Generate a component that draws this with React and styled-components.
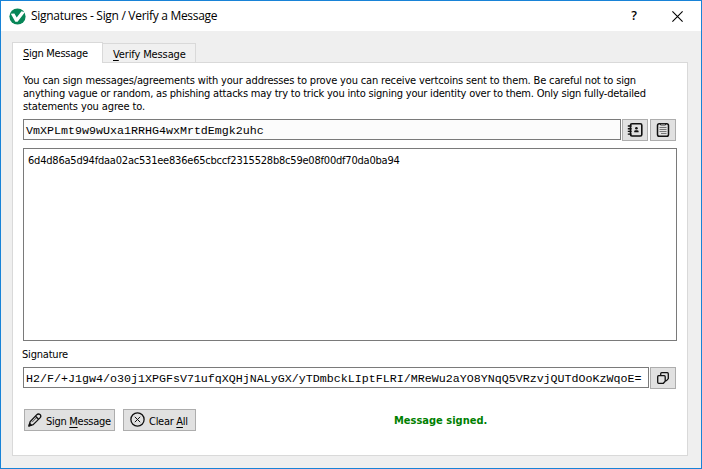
import React from "react";
import styled, { createGlobalStyle } from "styled-components";

const GlobalStyle = createGlobalStyle`
  * { box-sizing: border-box; }
  body { margin: 0; }
`;

const Window = styled.main`
  width: 702px;
  height: 469px;
  display: flex;
  flex-direction: column;
  border: 1px solid #1883d7;
  background: #efefef;
  color: #000;
  font: 11px/13px "DejaVu Sans Condensed", "DejaVu Sans", sans-serif;
  white-space: nowrap;
`;

const TitleBar = styled.header`
  height: 30px;
  flex: none;
  display: flex;
  align-items: center;
  padding: 0 18px 0 8px;
  background: #fff;
`;

const Title = styled.h1`
  flex: 1;
  margin: 0 0 0 5px;
  font: 400 12px/16px "Open Sans", sans-serif;
  letter-spacing: -0.3px;
`;

const CaptionButton = styled.button`
  display: flex;
  padding: 0;
  margin-left: 35px;
  border: 0;
  background: none;
  color: #000;
  font: 600 12.5px/16px "Open Sans", sans-serif;
`;

const Body = styled.div`
  flex: 1;
  display: flex;
  flex-direction: column;
  padding: 11px 13px 12px 11px;
`;

const Tabs = styled.nav`
  height: 21px;
  flex: none;
  display: flex;
  align-items: flex-end;
`;

const Tab = styled.button`
  width: ${(p) => (p.$active ? 91 : 93)}px;
  height: ${(p) => (p.$active ? 21 : 19)}px;
  margin-bottom: ${(p) => (p.$active ? 0 : 1)}px;
  padding: ${(p) => (p.$active ? "0 0 0 10px" : "3px 0 0 10px")};
  border: 1px solid #d9d9d9;
  border-bottom: 0;
  border-left-width: ${(p) => (p.$active ? 1 : 0)}px;
  background: ${(p) => (p.$active ? "#fff" : "#f0f0f0")};
  color: #000;
  font: inherit;
  letter-spacing: ${(p) => (p.$active ? -0.28 : -0.13)}px;
  text-align: left;
  position: relative;
  z-index: 1;
`;

const Panel = styled.section`
  flex: 1;
  display: flex;
  flex-direction: column;
  margin-top: -1px;
  padding: 11px 10px 0;
  border: 1px solid #d9d9d9;
  background: #fff;
`;

const Intro = styled.p`
  height: 45px;
  flex: none;
  margin: 0;
`;

const Line = styled.span`
  display: block;
  letter-spacing: ${(p) => p.$spacing}px;
`;

const FieldRow = styled.div`
  height: 22px;
  flex: none;
  display: flex;
  align-items: flex-start;
`;

const Field = styled.div`
  flex: 1;
  height: 21px;
  padding: 4px 2px 0;
  margin-right: 1px;
  border: 1px solid #7a7a7a;
  background: ${(p) => (p.$shaded ? "#fcfcfc" : "#fff")};
  font: 11.667px/14px "Courier New", "Liberation Mono", monospace;
`;

const MessageBox = styled.div`
  height: 193px;
  flex: none;
  margin-top: 7px;
  padding: 5px 4px;
  border: 1px solid #7a7a7a;
  letter-spacing: -0.21px;
`;

const Label = styled.div`
  height: 26px;
  flex: none;
  padding-top: 7px;
  margin-left: -1px;
  letter-spacing: -0.2px;
`;

const IconButton = styled.button`
  width: 26px;
  height: 22px;
  flex: none;
  display: flex;
  align-items: center;
  justify-content: center;
  padding: 0;
  margin-right: ${(p) => (p.$gap ? 2 : 1)}px;
  border: 1px solid #adadad;
  background: #e1e1e1;
`;

const Actions = styled.footer`
  display: flex;
  align-items: center;
  height: 22px;
  margin: 20px 0 0 1px;
`;

const ActionButton = styled.button`
  width: ${(p) => p.$width}px;
  height: 22px;
  display: flex;
  align-items: center;
  gap: ${(p) => p.$gap}px;
  padding: 3px 0 0 ${(p) => p.$inset}px;
  margin-right: 8px;
  border: 1px solid #adadad;
  background: #e1e1e1;
  color: #000;
  font: inherit;
  letter-spacing: -0.28px;

  svg { flex: none; margin-top: -4px; }
`;

const Status = styled.strong`
  margin-left: 190px;
  color: #008000;
  font-weight: 700;
`;

const Key = styled.span`
  text-decoration: underline;
  text-underline-offset: 1.5px;
  text-decoration-thickness: 1px;
  text-decoration-skip-ink: none;
`;

const Logo = () => (
  <svg width="17" height="17" viewBox="0 0 17 17">
    <circle cx="8.5" cy="8.5" r="8.1" fill="#078657" />
    <path d="M1.8 5.8l3.6-.3 2.3 4 4.800-6.200 3.400.9-7.300 9.500H6.300z" fill="#fff" />
  </svg>
);

const CloseIcon = () => (
  <svg width="11" height="11" viewBox="0 0 11 11" stroke="#000" strokeWidth="1.1">
    <path d="M.4.4l10.2 10.2M10.6.4L.4 10.6" />
  </svg>
);

const AddressBookIcon = () => (
  <svg width="16" height="16" viewBox="0 0 16 16" fill="none" stroke="#111">
    <rect x="3.5" y="1.700" width="11.300" height="12.300" rx="1.500" strokeWidth="1.600" />
    <path d="M.8 4h3.8M.8 6.700h3.800M.8 9.400h3.800M.8 12.100h3.800" strokeWidth="1.400" />
    <circle cx="9.400" cy="6.200" r="1.300" fill="#111" stroke="none" />
    <path d="M7.200 10.300V9.100c0-1 4.400-1 4.400 0v1.200z" fill="#111" stroke="none" />
  </svg>
);

const ClipboardIcon = () => (
  <svg width="14" height="16" viewBox="0 0 14 16" fill="none" stroke="#111">
    <rect x="1.500" y="1.700" width="11" height="12.600" rx="1.800" strokeWidth="1.500" />
    <path d="M4.500 1.500h5v1.500h-5z" fill="#bbb" strokeWidth=".8" />
    <path d="M3.500 5.500h7M3.500 7.500h7M3.500 9.500h7M5 11.500h5.500" stroke="#777" strokeWidth="1" />
  </svg>
);

const CopyIcon = () => (
  <svg width="12" height="12" viewBox="0 0 12 12" fill="none" stroke="#111" strokeWidth="1.3">
    <path d="M3.700 3.600V1.700q0-1 1-1h5.600q1 0 1 1v4.900l-1.800 2H8.200" />
    <path d="M1.600 3.700h5.600q1 0 1 1v4.600L6.400 11.300H1.700q-1 0-1-1V4.700q0-1 .9-1z" />
  </svg>
);

const PenIcon = () => (
  <svg width="14" height="14" viewBox="0 0 14 14" fill="none" stroke="#111" strokeWidth="1.300" strokeLinejoin="round">
    <path d="M1 13l1.100-4.200L8.600 1.900c1-1 2.200-1.300 3.400-.3 1.100 1 1 2.200 0 3.300L5.200 11.600z" />
    <path d="M1 13l.7-2.500 1.700 1.700z" fill="#111" />
    <path d="M7.500 3.300l3 2.900" strokeWidth="1.500" />
    <path d="M4.100 9.200l4.200-4.400" strokeWidth=".7" />
  </svg>
);

const ClearIcon = () => (
  <svg width="15" height="15" viewBox="0 0 15 15" fill="none" stroke="#111">
    <circle cx="7.500" cy="7.500" r="6.600" strokeWidth="1.300" />
    <path d="M4.800 4.800l5.400 5.400M10.200 4.800l-5.400 5.400" strokeWidth="1" />
  </svg>
);

export default function App() {
  return (
    <>
      <GlobalStyle />
      <Window>
        <TitleBar>
          <Logo />
          <Title>Signatures - Sign / Verify a Message</Title>
          <CaptionButton>?</CaptionButton>
          <CaptionButton aria-label="Close"><CloseIcon /></CaptionButton>
        </TitleBar>
        <Body>
          <Tabs>
            <Tab $active><Key>S</Key>ign Message</Tab>
            <Tab><Key>V</Key>erify Message</Tab>
          </Tabs>
          <Panel>
            <Intro>
              <Line $spacing={-0.163}>You can sign messages/agreements with your addresses to prove you can receive vertcoins sent to them. Be careful not to sign</Line>
              <Line $spacing={-0.208}>anything vague or random, as phishing attacks may try to trick you into signing your identity over to them. Only sign fully-detailed</Line>
              <Line $spacing={-0.12}>statements you agree to.</Line>
            </Intro>
            <FieldRow>
              <Field $shaded>VmXPLmt9w9wUxa1RRHG4wxMrtdEmgk2uhc</Field>
              <IconButton $gap aria-label="Address book"><AddressBookIcon /></IconButton>
              <IconButton aria-label="Paste"><ClipboardIcon /></IconButton>
            </FieldRow>
            <MessageBox>6d4d86a5d94fdaa02ac531ee836e65cbccf2315528b8c59e08f00df70da0ba94</MessageBox>
            <Label>Signature</Label>
            <FieldRow>
              <Field>H2/F/+J1gw4/o30j1XPGFsV71ufqXQHjNALyGX/yTDmbckLIptFLRI/MReWu2aYO8YNqQ5VRzvjQUTdOoKzWqoE=</Field>
              <IconButton aria-label="Copy"><CopyIcon /></IconButton>
            </FieldRow>
            <Actions>
              <ActionButton $width={91} $inset={3} $gap={4}>
                <PenIcon />
                <span>Sign <Key>M</Key>essage</span>
              </ActionButton>
              <ActionButton $width={73} $inset={6} $gap={4}>
                <ClearIcon />
                <span>Clear <Key>A</Key>ll</span>
              </ActionButton>
              <Status>Message signed.</Status>
            </Actions>
          </Panel>
        </Body>
      </Window>
    </>
  );
}
